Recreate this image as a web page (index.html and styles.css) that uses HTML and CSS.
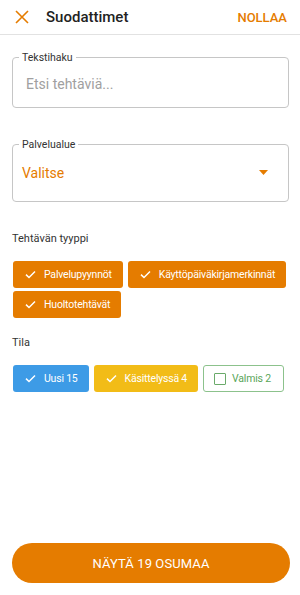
FILE: index.html
```html
<!DOCTYPE html>
<html lang="fi">
<head>
<meta charset="utf-8">
<link rel="stylesheet" href="styles.css">
</head>
<body>
<div class="page">
  <header class="topbar">
    <svg class="close" width="14" height="14" viewBox="0 0 14 14"><path d="M1 1L13 13M13 1L1 13" stroke="#e57c00" stroke-width="1.6" fill="none"/></svg>
    <span class="title">Suodattimet</span>
    <span class="reset">NOLLAA</span>
  </header>
  <main class="content">
    <fieldset class="field">
      <legend>Tekstihaku</legend>
      <div class="field-body field-text">
        <span class="placeholder">Etsi tehtäviä...</span>
      </div>
    </fieldset>
    <fieldset class="field field-gap">
      <legend>Palvelualue</legend>
      <div class="field-body field-select">
        <span class="select-value">Valitse</span>
        <svg class="caret" width="9" height="5" viewBox="0 0 9 5"><path d="M0 0H9L4.5 5Z" fill="#e57c00"/></svg>
      </div>
    </fieldset>
    <div class="section-label">Tehtävän tyyppi</div>
    <div class="chips">
      <span class="chip chip-orange"><svg class="check" width="11" height="9" viewBox="0 0 11 9"><path d="M1 4.6L4 7.5L10 1.5" stroke="#fff" stroke-width="1.5" fill="none"/></svg>Palvelupyynnöt</span>
      <span class="chip chip-orange"><svg class="check" width="11" height="9" viewBox="0 0 11 9"><path d="M1 4.6L4 7.5L10 1.5" stroke="#fff" stroke-width="1.5" fill="none"/></svg>Käyttöpäiväkirjamerkinnät</span>
      <span class="chip chip-orange"><svg class="check" width="11" height="9" viewBox="0 0 11 9"><path d="M1 4.6L4 7.5L10 1.5" stroke="#fff" stroke-width="1.5" fill="none"/></svg>Huoltotehtävät</span>
    </div>
    <div class="section-label section-tila">Tila</div>
    <div class="chips">
      <span class="chip chip-blue"><svg class="check" width="11" height="9" viewBox="0 0 11 9"><path d="M1 4.6L4 7.5L10 1.5" stroke="#fff" stroke-width="1.5" fill="none"/></svg>Uusi 15</span>
      <span class="chip chip-yellow"><svg class="check" width="11" height="9" viewBox="0 0 11 9"><path d="M1 4.6L4 7.5L10 1.5" stroke="#fff" stroke-width="1.5" fill="none"/></svg>Käsittelyssä 4</span>
      <span class="chip chip-outline"><span class="box"></span>Valmis 2</span>
    </div>
  </main>
  <footer class="footer">
    <button class="show-btn">NÄYTÄ 19 OSUMAA</button>
  </footer>
</div>
</body>
</html>
```
FILE: styles.css
```css
* { box-sizing: border-box; }
html, body { margin: 0; padding: 0; background: #fff; }
body { font-family: Roboto, "Noto Sans", sans-serif; color: #222; }
.page { display: flex; flex-direction: column; min-height: 595px; }
.topbar {
  height: 35px;
  display: flex;
  align-items: center;
  padding: 0 13px 0 15px;
  border-bottom: 1px solid #e2e2e2;
}
.close { flex: none; }
.title { margin-left: 17px; font-size: 15px; font-weight: 500; color: #222; flex: 1; }
.reset { font-size: 13px; font-weight: 500; color: #e57c00; }
.content { padding: 16px 10px 0 12px; display: flex; flex-direction: column; }
.field {
  margin: 0 1px 0 0;
  border: 1px solid #c6c6c6;
  border-radius: 4px;
  padding: 0;
  min-width: 0;
}
.field-gap { margin-top: 30px; }
.field legend {
  font-size: 10.5px;
  color: #333;
  padding: 0 3px;
  margin-left: 6px;
  line-height: 13px;
}
.field-body { display: flex; align-items: center; }
.field-text { height: 40px; margin-bottom: 3px; padding-left: 13px; }
.placeholder { font-size: 14px; color: #a0a0a0; }
.field-select { height: 43px; margin-bottom: 7px; padding: 0 20px 0 9px; }
.select-value { font-size: 14px; color: #e57c00; flex: 1; }
.caret { flex: none; }
.section-label { font-size: 11px; color: #333; margin-top: 30px; line-height: 14px; }
.section-tila { margin-top: 18px; }
.chips { display: flex; flex-wrap: wrap; gap: 3px 5px; margin-top: 15px; padding-left: 1px; }
.chip {
  height: 27px;
  display: inline-flex;
  align-items: center;
  padding: 0 11px 0 12px;
  border-radius: 3px;
  font-size: 10.5px;
  letter-spacing: -0.2px;
  color: #fff;
}
.check { margin-right: 8px; flex: none; }
.chip-orange { background: #e57c00; }
.chip-blue { background: #3d9be6; }
.chip-yellow { background: #f2bc17; }
.chip-outline { background: #fff; border: 1px solid #8cc28c; color: #5aa65a; padding: 0 12px 0 10px; }
.box { width: 12px; height: 12px; border: 1px solid #6aaa6a; border-radius: 1px; margin-right: 6px; }
.footer { margin-top: auto; padding: 0 10px 12px 12px; }
.show-btn {
  width: 100%;
  height: 40px;
  border: none;
  border-radius: 20px;
  background: #e57c00;
  color: #fff;
  font-family: Roboto, "Noto Sans", sans-serif;
  font-size: 13px;
  font-weight: 400;
  letter-spacing: 0.1px;
}
```
